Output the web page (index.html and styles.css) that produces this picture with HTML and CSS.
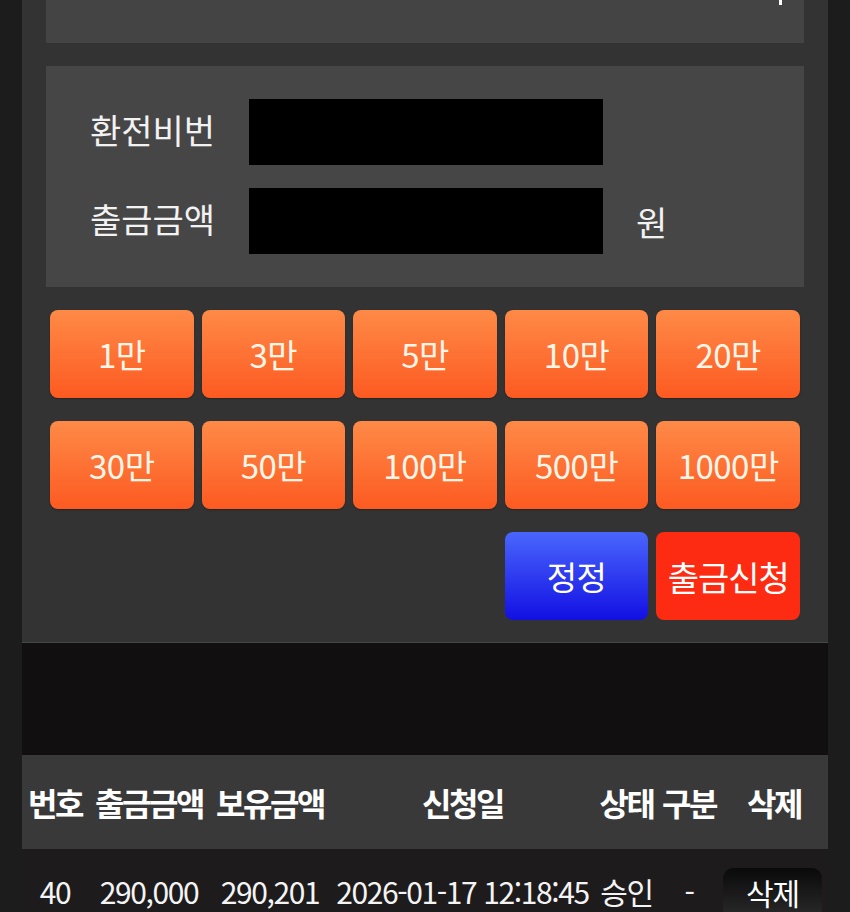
FILE: index.html
```html
<!DOCTYPE html>
<html lang="ko">
<head>
<meta charset="utf-8">
<link rel="stylesheet" href="styles.css">
</head>
<body>
<div class="wrap">
  <section class="form-area">
    <div class="top-panel"><span class="caret"></span></div>
    <div class="form-panel">
      <div class="form-row">
        <label class="label">환전비번</label>
        <div class="input"></div>
      </div>
      <div class="form-row">
        <label class="label">출금금액</label>
        <div class="input"></div>
        <span class="unit">원</span>
      </div>
    </div>
    <div class="btn-grid">
      <button class="amt">1만</button>
      <button class="amt">3만</button>
      <button class="amt">5만</button>
      <button class="amt">10만</button>
      <button class="amt">20만</button>
      <button class="amt">30만</button>
      <button class="amt">50만</button>
      <button class="amt">100만</button>
      <button class="amt">500만</button>
      <button class="amt">1000만</button>
      <button class="btn-reset">정정</button>
      <button class="btn-submit">출금신청</button>
    </div>
  </section>
  <div class="spacer"></div>
  <div class="table">
    <div class="thead">
      <div class="cell">번호</div>
      <div class="cell">출금금액</div>
      <div class="cell">보유금액</div>
      <div class="cell">신청일</div>
      <div class="cell">상태</div>
      <div class="cell">구분</div>
      <div class="cell">삭제</div>
    </div>
    <div class="trow">
      <div class="cell">40</div>
      <div class="cell">290,000</div>
      <div class="cell">290,201</div>
      <div class="cell">2026-01-17 12:18:45</div>
      <div class="cell">승인</div>
      <div class="cell">-</div>
      <div class="cell"><button class="del">삭제</button></div>
    </div>
  </div>
</div>
</body>
</html>
```

FILE: styles.css
```css
* { box-sizing: border-box; }
html, body { margin: 0; padding: 0; }
body {
  background: #1c1c1c;
  font-family: "Noto Sans CJK KR", "Noto Sans", sans-serif;
  color: #fff;
  height: 912px;
  overflow: hidden;
}
.wrap {
  width: 806px;
  margin: 0 auto;
}
.form-area {
  background: #333333;
  padding: 0 28px 22px;
  border-bottom: 1px solid #474747;
}
.top-panel {
  position: relative;
  height: 43px;
  margin: 0 -4px;
  background: #444444;
}
.caret {
  position: absolute;
  left: 733px;
  top: 0;
  width: 3px;
  height: 5px;
  background: #ffffff;
}
.form-panel {
  margin: 23px -4px 0;
  background: #464646;
  padding: 33px 0 33px 44px;
  display: flex;
  flex-direction: column;
  gap: 23px;
}
.form-row {
  display: flex;
  align-items: center;
  height: 66px;
}
.label {
  width: 159px;
  font-size: 34px;
  line-height: 40px;
  color: #f2f2f2;
  letter-spacing: 0;
  margin-top: -4px;
}
.input {
  width: 354px;
  height: 66px;
  background: #000;
}
.unit {
  margin-left: 33px;
  font-size: 34px;
  color: #f2f2f2;
}
.btn-grid {
  margin-top: 23px;
  display: grid;
  grid-template-columns: repeat(5, 1fr);
  gap: 23px 8px;
}
.btn-grid button {
  height: 88px;
  border: none;
  border-radius: 8px;
  font-family: inherit;
  font-size: 33px;
  color: #fff6ea;
  letter-spacing: -0.5px;
  padding: 0;
}
.amt {
  background: linear-gradient(#fe8a47, #fd5a21);
  box-shadow: 0 1px 2px rgba(0,0,0,0.3);
}
.btn-reset {
  grid-column: 4;
  background: linear-gradient(#4a66fd, #1210e2);
  color: #fff !important;
}
.btn-submit {
  grid-column: 5;
  background: #fc2b12;
  color: #fff !important;
  font-size: 34px !important;
  letter-spacing: -1px !important;
}
.spacer {
  height: 112px;
  background: #110f10;
}
.table {
  width: 806px;
}
.thead, .trow {
  display: grid;
  grid-template-columns: 66px 122px 120px 265px 63px 62px 108px;
  align-items: center;
}
.thead {
  height: 94px;
  background: #3a393a;
  font-weight: bold;
  font-size: 32px;
  letter-spacing: -2.5px;
}
.trow {
  height: 64px;
  background: #1d1b1c;
  font-size: 30px;
  line-height: 34px;
  letter-spacing: -1.4px;
  color: #f4f4f4;
  align-items: start;
  padding-top: 25px;
}
.cell {
  text-align: center;
  white-space: nowrap;
}
.del {
  display: block;
  width: 99px;
  height: 44px;
  margin-top: -6px;
  border: none;
  border-radius: 10px 10px 0 0;
  background: linear-gradient(#0a0a0a, #262626);
  color: #fff;
  font-family: inherit;
  font-size: 30px;
  line-height: 34px;
  letter-spacing: -1px;
  padding: 4px 0 0;
  margin-left: 3px;
}
```
